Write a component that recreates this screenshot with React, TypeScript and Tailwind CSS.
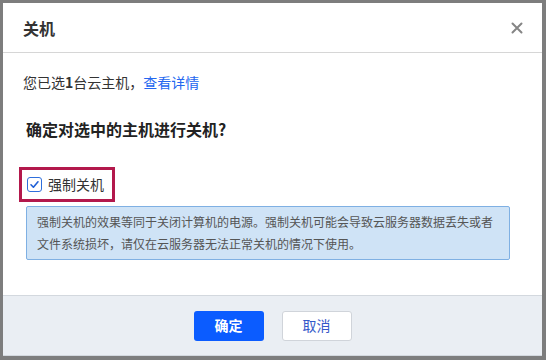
import React from 'react'

const font = '"Noto Sans CJK SC", "Liberation Sans", sans-serif'

function CloseIcon() {
  return (
    <svg width="12" height="12" viewBox="0 0 12 12" className="text-[#858585]">
      <path d="M1.5 1.5 L10.5 10.5 M10.5 1.5 L1.5 10.5" stroke="currentColor" strokeWidth="2" strokeLinecap="round" />
    </svg>
  )
}

function Checkbox() {
  return (
    <span className="flex h-[15px] w-[15px] items-center justify-center rounded-[3px] border border-[#2f6fdc] bg-white">
      <svg width="11" height="11" viewBox="0 0 11 11">
        <path d="M2 5.8 L4.4 8.2 L9 2.8" fill="none" stroke="#1f5fd6" strokeWidth="1.6" strokeLinecap="round" strokeLinejoin="round" />
      </svg>
    </span>
  )
}

export default function App() {
  return (
    <div className="h-[360px] w-[546px] overflow-hidden bg-[#7d7d7d] pl-[3px] pt-[3px]" style={{ fontFamily: font }}>
      <div className="flex h-[353px] w-[539px] flex-col bg-white">
        {/* Header */}
        <div className="flex h-[50px] items-center justify-between border-b border-[#d6d6d6] pl-[20px] pr-[19px]">
          <span className="text-[16px] font-bold text-[#333]">关机</span>
          <CloseIcon />
        </div>

        {/* Body */}
        <div className="flex flex-1 flex-col pl-[20px] pt-[18px]">
          <p className="text-[14px] leading-[22px] text-[#333]">
            您已选<span className="font-bold">1</span>台云主机，<span className="text-[#2467f0]">查看详情</span>
          </p>
          <p className="mt-[24px] pl-[3px] text-[16px] font-bold leading-[24px] text-[#222]">确定对选中的主机进行关机?</p>

          <div className="ml-[-4px] mt-[26px] flex h-[35px] w-[96px] items-center gap-[6px] border-[3px] border-[#b3184c] pl-[5px]">
            <Checkbox />
            <span className="text-[14px] text-[#333]">强制关机</span>
          </div>

          <div className="ml-[3px] mt-[4px] w-[484px] rounded-[2px] border border-[#7fb0e3] bg-[#cfe3f6] px-[10px] py-[4px] text-[12px] leading-[22px] text-[#555]">
            强制关机的效果等同于关闭计算机的电源。强制关机可能会导致云服务器数据丢失或者文件系统损坏，请仅在云服务器无法正常关机的情况下使用。
          </div>
        </div>

        {/* Footer */}
        <div className="flex h-[61px] items-center justify-center gap-[18px] border-b border-t border-[#d3d8de] bg-[#eaeef3]">
          <button className="h-[30px] w-[70px] rounded-[3px] bg-[#0b5cff] text-[14px] font-bold text-white">确定</button>
          <button className="h-[30px] w-[70px] rounded-[3px] border border-[#d0d4da] bg-white text-[14px] text-[#3458c9]">取消</button>
        </div>
      </div>
    </div>
  )
}
